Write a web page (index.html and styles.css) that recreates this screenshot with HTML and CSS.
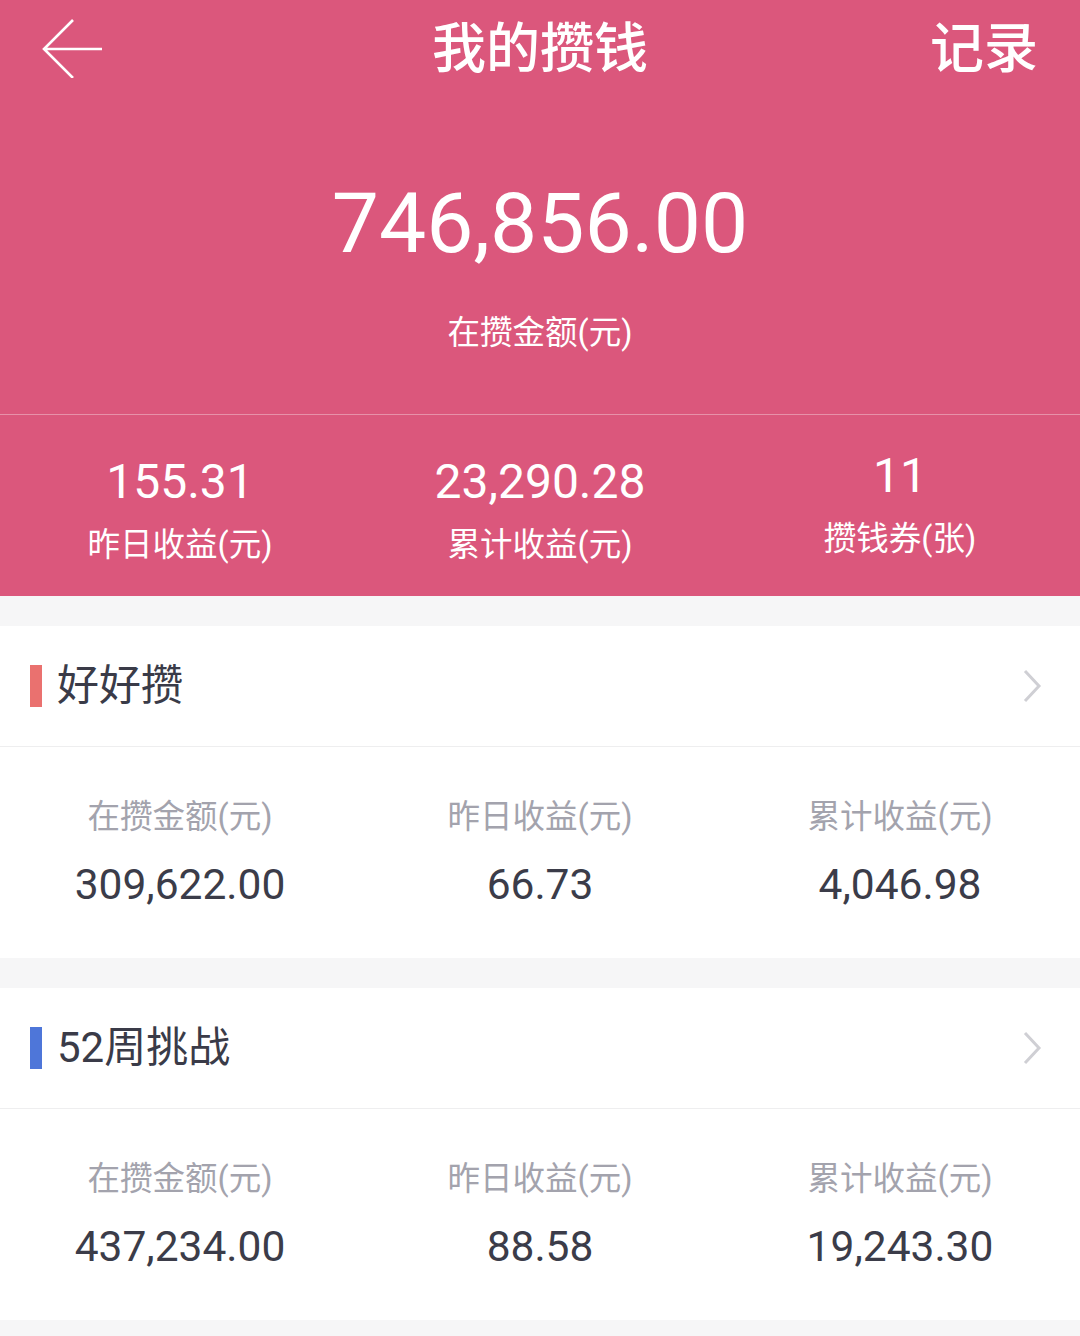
FILE: index.html
```html
<!DOCTYPE html>
<html lang="zh-CN">
<head>
  <meta charset="UTF-8" />
  <title>我的攒钱</title>
  <link rel="stylesheet" href="styles.css">
</head>
<body>

  <div class="top">
    <div class="nav">
      <a class="back" href="#" aria-label="返回">
        <svg width="60" height="60" viewBox="0 0 60 60">
          <path d="M31 2 L2 31 L31 60 M2 31 L60 31" fill="none" stroke="#fff" stroke-width="2.6" />
        </svg>
      </a>
      <h1>我的攒钱</h1>
      <a class="record" href="#">记录</a>
    </div>

    <div class="hero">
      <div class="hero-amount">746,856.00</div>
      <div class="hero-label">在攒金额(元)</div>
    </div>

    <div class="stats">
      <div class="stat">
        <div class="stat-num">155.31</div>
        <div class="stat-label">昨日收益(元)</div>
      </div>
      <div class="stat">
        <div class="stat-num">23,290.28</div>
        <div class="stat-label">累计收益(元)</div>
      </div>
      <div class="stat stat-raised">
        <div class="stat-num">11</div>
        <div class="stat-label">攒钱券(张)</div>
      </div>
    </div>
  </div>

  <!-- 好好攒 -->
  <div class="card">
    <div class="card-head">
      <span class="bar bar-red"></span>
      <span class="card-title">好好攒</span>
      <svg class="chevron" width="20" height="36" viewBox="0 0 20 36">
        <path d="M3 3 L17 18 L3 33" fill="none" stroke="#cfcfd4" stroke-width="3" />
      </svg>
    </div>
    <div class="card-body">
      <div class="cell">
        <div class="cell-label">在攒金额(元)</div>
        <div class="cell-value">309,622.00</div>
      </div>
      <div class="cell">
        <div class="cell-label">昨日收益(元)</div>
        <div class="cell-value">66.73</div>
      </div>
      <div class="cell">
        <div class="cell-label">累计收益(元)</div>
        <div class="cell-value">4,046.98</div>
      </div>
    </div>
  </div>

  <!-- 52周挑战 -->
  <div class="card">
    <div class="card-head">
      <span class="bar bar-blue"></span>
      <span class="card-title">52周挑战</span>
      <svg class="chevron" width="20" height="36" viewBox="0 0 20 36">
        <path d="M3 3 L17 18 L3 33" fill="none" stroke="#cfcfd4" stroke-width="3" />
      </svg>
    </div>
    <div class="card-body">
      <div class="cell">
        <div class="cell-label">在攒金额(元)</div>
        <div class="cell-value">437,234.00</div>
      </div>
      <div class="cell">
        <div class="cell-label">昨日收益(元)</div>
        <div class="cell-value">88.58</div>
      </div>
      <div class="cell">
        <div class="cell-label">累计收益(元)</div>
        <div class="cell-value">19,243.30</div>
      </div>
    </div>
  </div>

</body>
</html>
```

FILE: styles.css
```css
* {
  box-sizing: border-box;
}

body {
  margin: 0;
  font-family: Roboto, "Noto Sans CJK SC", sans-serif;
  background: #f6f6f7;
  color: #3a3b48;
}

/* Pink header */
.top {
  background: #db577c;
  color: #fff;
  margin-bottom: 30px;
}

.nav {
  height: 100px;
  display: flex;
  align-items: center;
  justify-content: space-between;
  padding: 0 42px;
}
.back {
  display: flex;
  width: 110px;
  margin-top: -4px;
}
.nav h1 {
  margin: 0;
  font-size: 54px;
  font-weight: 500;
  line-height: 1;
}
.record {
  width: 110px;
  text-align: right;
  color: #fff;
  text-decoration: none;
  font-size: 54px;
  font-weight: 500;
  line-height: 1;
}

.hero {
  padding: 81px 0 61px;
  text-align: center;
  border-bottom: 1px solid rgba(255,255,255,0.35);
}
.hero-amount {
  font-size: 84px;
  line-height: 86px;
}
.hero-label {
  margin-top: 46px;
  font-size: 32.5px;
  line-height: 40px;
}

.stats {
  display: grid;
  grid-template-columns: repeat(3, 1fr);
  padding: 39px 0 31px;
  text-align: center;
}
.stat-num {
  font-size: 48px;
  line-height: 56px;
}
.stat-label {
  margin-top: 15px;
  font-size: 32.5px;
  line-height: 40px;
}
.stat-raised {
  margin-top: -6px;
}

/* Cards */
.card {
  background: #fff;
  margin-bottom: 30px;
}
.card-head {
  height: 121px;
  display: flex;
  align-items: center;
  padding: 0 38px 0 30px;
  border-bottom: 1px solid #eeeeef;
}
.bar {
  width: 12px;
  height: 42px;
  margin-right: 15px;
}
.bar-red {
  background: #ea716f;
}
.bar-blue {
  background: #4e76d9;
}
.card-title {
  flex: 1;
  font-size: 42px;
  line-height: 48px;
  color: #3a3b48;
}

.card-body {
  display: grid;
  grid-template-columns: repeat(3, 1fr);
  padding: 50px 0 48px;
  text-align: center;
}
.cell-label {
  font-size: 32.5px;
  line-height: 40px;
  color: #a3a3ad;
}
.cell-value {
  margin-top: 23px;
  font-size: 42.5px;
  line-height: 50px;
  color: #3b3c49;
}
```
